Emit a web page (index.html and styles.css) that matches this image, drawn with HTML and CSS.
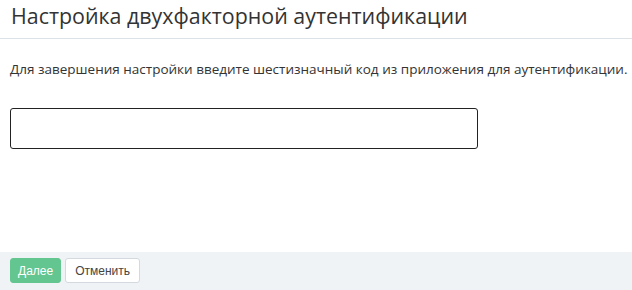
FILE: index.html
```html
<!DOCTYPE html>
<html>
<head>
  <meta charset="utf-8">
  <title>Настройка двухфакторной аутентификации</title>
  <link rel="stylesheet" href="styles.css">
</head>
<body>
  <div class="modal">
    <div class="modal-header">
      <h2>Настройка двухфакторной аутентификации</h2>
    </div>
    <div class="modal-body">
      <p>Для завершения настройки введите шестизначный код из приложения для аутентификации.</p>
      <input type="text" id="code-input" class="code-input">
    </div>
    <div class="modal-footer">
      <button type="submit" class="btn btn-primary">Далее</button>
      <button type="button" class="btn btn-default">Отменить</button>
    </div>
  </div>
</body>
</html>
```

FILE: styles.css
```css
body {
  margin: 0;
  font-family: 'Open Sans', sans-serif;
  color: #333;
  background: white;
}
.modal {
  display: flex;
  flex-direction: column;
  height: 290px;
}
.modal-header {
  padding: 2px 12px 8px 11px;
  border-bottom: 1px solid #dde2e6;
}
.modal-header h2 {
  margin: 0;
  font-size: 21.4px;
  font-weight: 400;
  line-height: 28px;
  color: #333;
}
.modal-body {
  flex: 1;
  padding: 0 10px;
}
.modal-body p {
  margin: 20px 0 0 0;
  font-size: 13.5px;
  line-height: 20px;
  white-space: nowrap;
}
.code-input {
  display: block;
  width: 468px;
  height: 41px;
  margin-top: 29px;
  border: 1px solid #222;
  border-radius: 3px;
  box-sizing: border-box;
  padding: 6px 10px;
  font-size: 14px;
}
.modal-footer {
  background: #f0f3f5;
  padding: 6px 10px 7px 10px;
  display: flex;
  gap: 4px;
}
.btn {
  font-family: 'Liberation Sans', Arial, sans-serif;
  font-size: 12px;
  height: 25px;
  padding: 0 7px;
  border-radius: 3px;
  cursor: pointer;
}
.btn-primary {
  background: #63c590;
  border: 1px solid #63c590;
  color: white;
}
.btn-default {
  background: white;
  border: 1px solid #d3d9de;
  color: #444;
  padding: 0 9px;
}
```
